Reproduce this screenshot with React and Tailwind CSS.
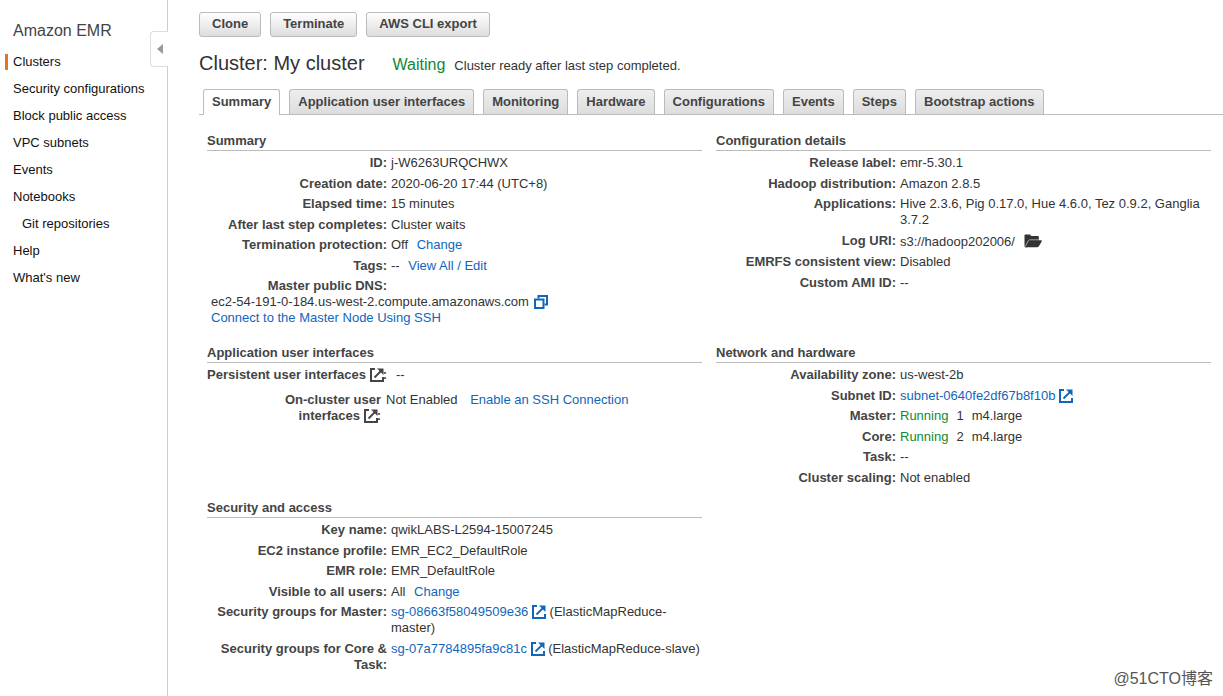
import React from "react";

const navItems = [
  { label: "Clusters", active: true },
  { label: "Security configurations" },
  { label: "Block public access" },
  { label: "VPC subnets" },
  { label: "Events" },
  { label: "Notebooks" },
  { label: "Git repositories", nested: true },
  { label: "Help" },
  { label: "What's new" },
];

const actions = ["Clone", "Terminate", "AWS CLI export"];

const tabs = [
  "Summary",
  "Application user interfaces",
  "Monitoring",
  "Hardware",
  "Configurations",
  "Events",
  "Steps",
  "Bootstrap actions",
];

const ExternalIcon = ({ className = "" }) => (
  <svg
    viewBox="0 0 14 14"
    className={`inline-block size-[14px] align-[-3px] ${className}`}
    fill="none"
    stroke="currentColor"
    strokeWidth="2"
    aria-hidden="true"
  >
    <path d="M5 1H1v12h12V9" />
    <path d="M4.5 9.5 11 3" strokeWidth="1.8" />
    <path d="M7 .5h6.5V7z" fill="currentColor" stroke="none" />
  </svg>
);

const CopyIcon = () => (
  <svg
    viewBox="0 0 14 14"
    className="size-[14px]"
    fill="none"
    stroke="currentColor"
    strokeWidth="2"
    aria-hidden="true"
  >
    <path d="M4.5 3.5V1H13v8.5h-2.5" />
    <path d="M1 4.5h8.5V13H1z" />
  </svg>
);

const FolderIcon = () => (
  <svg viewBox="0 0 18 14" className="h-[14px] w-[18px]" aria-hidden="true">
    <path
      d="M.5 12V1.6C.5.8.9.4 1.6.4h4c.8 0 1.1.5 1.4 1.6h6.6c.8 0 1.2.4 1.2 1.2V8L2 13.4C1 13.4.5 12.8.5 12z"
      fill="#333"
    />
    <path
      d="M1.4 13.2 4.6 7.3c.4-.8.9-1.1 1.7-1.1H17c.8 0 1.1.5.7 1.2l-2.7 4.7c-.4.8-.9 1.1-1.7 1.1z"
      fill="#333"
    />
    <path
      d="M1.2 12.6 4.2 7c.5-.9 1-1.2 1.9-1.2h8.7"
      fill="none"
      stroke="#bbb"
      strokeWidth=".8"
    />
  </svg>
);

const Link = ({ children, className = "" }) => (
  <a href="#" className={`text-[#1166bb] hover:underline ${className}`}>
    {children}
  </a>
);

const Section = ({ title, children }) => (
  <section>
    <h2 className="border-b border-[#bbb] pb-px text-[13px] font-bold leading-4 text-[#444]">
      {title}
    </h2>
    <dl className="pt-1">{children}</dl>
  </section>
);

const Row = ({ label, children }) => (
  <div className="flex gap-1 odd:pb-[5px] even:pb-1">
    <dt className="w-[180px] shrink-0 text-right font-bold text-[#444]">
      {label}:
    </dt>
    <dd>{children}</dd>
  </div>
);

const Sidebar = () => (
  <nav className="relative w-[168px] shrink-0 border-r border-[#ccc] pt-[21px]">
    <h1 className="pl-[13px] text-base leading-5 text-[#444]">Amazon EMR</h1>
    <ul className="pt-[13px]">
      {navItems.map((item) => (
        <li key={item.label} className="pb-[11px] pl-[5px]">
          <a
            href="#"
            className={`block border-l-[3px] text-[#111] ${
              item.active ? "border-[#dd7722]" : "border-transparent"
            } ${item.nested ? "pl-[14px]" : "pl-[5px]"}`}
          >
            {item.label}
          </a>
        </li>
      ))}
    </ul>
    {/* collapse handle sits on top of the sidebar border */}
    <button
      aria-label="Collapse sidebar"
      className="absolute -right-px top-[31px] flex h-9 w-[18px] items-center justify-center rounded-l border border-r-0 border-[#ddd] bg-white"
    >
      <svg viewBox="0 0 6 10" className="h-[10px] w-[6px]" aria-hidden="true">
        <path d="M6 0v10L0 5z" fill="#999" />
      </svg>
    </button>
  </nav>
);

const App = () => (
  <div className="relative flex min-h-screen bg-white font-['Liberation_Sans',Arial,sans-serif] text-[13px] leading-4 text-[#333]">
    <Sidebar />

    <main className="min-w-0 flex-1 pt-3">
      <div className="flex gap-[9px] pl-[31px]">
        {actions.map((label) => (
          <button
            key={label}
            className="h-[25px] rounded-[3px] border border-[#bbb] bg-linear-to-b from-white to-[#ddd] px-3 pb-px font-bold text-[#444]"
          >
            {label}
          </button>
        ))}
      </div>

      <div className="flex items-baseline pl-[31px] pt-[14px]">
        <h2 className="text-xl leading-6 text-[#333]">Cluster: My cluster</h2>
        <span className="pl-7 text-base leading-6 text-[#118833]">Waiting</span>
        <span className="pl-[9px]">Cluster ready after last step completed.</span>
      </div>

      <div className="ml-[31px] mt-3 flex gap-[9px] border-b border-[#bbb] pl-1">
        {tabs.map((tab, idx) => (
          <button
            key={tab}
            className={`rounded-t-[3px] border border-b-0 border-[#bbb] px-2 pt-1 font-bold text-[#444] ${
              idx === 0
                ? "-mb-px bg-white pb-[5px]"
                : "bg-linear-to-b from-[#eee] to-[#ddd] pb-1"
            }`}
          >
            {tab}
          </button>
        ))}
      </div>

      <div className="grid grid-cols-2 gap-x-[14px] gap-y-[10px] pl-[39px] pr-3 pt-[18px]">
        <Section title="Summary">
          <Row label="ID">j-W6263URQCHWX</Row>
          <Row label="Creation date">2020-06-20 17:44 (UTC+8)</Row>
          <Row label="Elapsed time">15 minutes</Row>
          <Row label="After last step completes">Cluster waits</Row>
          <Row label="Termination protection">
            Off <Link className="ml-[5px]">Change</Link>
          </Row>
          <Row label="Tags">
            -- <Link className="ml-[5px]">View All / Edit</Link>
          </Row>
          <div className="pb-[9px]">
            <dt className="w-[180px] text-right font-bold text-[#444]">
              Master public DNS:
            </dt>
            <dd className="pl-1">
              <div className="flex items-center gap-[5px]">
                ec2-54-191-0-184.us-west-2.compute.amazonaws.com
                <button aria-label="Copy DNS" className="text-[#1166bb]">
                  <CopyIcon />
                </button>
              </div>
              <Link>Connect to the Master Node Using SSH</Link>
            </dd>
          </div>
        </Section>

        <Section title="Configuration details">
          <Row label="Release label">emr-5.30.1</Row>
          <Row label="Hadoop distribution">Amazon 2.8.5</Row>
          <Row label="Applications">
            Hive 2.3.6, Pig 0.17.0, Hue 4.6.0, Tez 0.9.2, Ganglia 3.7.2
          </Row>
          <Row label="Log URI">
            <div className="flex items-start gap-[9px] pt-px">
              s3://hadoop202006/
              <button aria-label="Browse logs">
                <FolderIcon />
              </button>
            </div>
          </Row>
          <Row label="EMRFS consistent view">Disabled</Row>
          <Row label="Custom AMI ID">--</Row>
        </Section>

        <Section title="Application user interfaces">
          <div className="flex gap-[9px] pb-[9px]">
            <dt className="w-[180px] shrink-0 whitespace-nowrap text-right font-bold text-[#444]">
              Persistent user interfaces <ExternalIcon className="-mr-px" />:
            </dt>
            <dd>--</dd>
          </div>
          <div className="flex gap-[5px]">
            <dt className="w-[174px] shrink-0 pl-[70px] text-right font-bold text-[#444]">
              On-cluster user interfaces <ExternalIcon className="-mr-px" />:
            </dt>
            <dd>
              Not Enabled <Link className="ml-[9px]">Enable an SSH Connection</Link>
            </dd>
          </div>
        </Section>

        <Section title="Network and hardware">
          <Row label="Availability zone">us-west-2b</Row>
          <Row label="Subnet ID">
            <Link>
              subnet-0640fe2df67b8f10b <ExternalIcon />
            </Link>
          </Row>
          <Row label="Master">
            <span className="text-[#118833]">Running</span>
            <span className="px-2">1</span>m4.large
          </Row>
          <Row label="Core">
            <span className="text-[#118833]">Running</span>
            <span className="px-2">2</span>m4.large
          </Row>
          <Row label="Task">--</Row>
          <Row label="Cluster scaling">Not enabled</Row>
        </Section>

        <Section title="Security and access">
          <Row label="Key name">qwikLABS-L2594-15007245</Row>
          <Row label="EC2 instance profile">EMR_EC2_DefaultRole</Row>
          <Row label="EMR role">EMR_DefaultRole</Row>
          <Row label="Visible to all users">
            All <Link className="ml-[5px]">Change</Link>
          </Row>
          <Row label="Security groups for Master">
            <Link>
              sg-08663f58049509e36 <ExternalIcon />
            </Link>{" "}
            (ElasticMapReduce-master)
          </Row>
          <Row label="Security groups for Core & Task">
            <Link>
              sg-07a7784895fa9c81c <ExternalIcon />
            </Link>{" "}
            (ElasticMapReduce-slave)
          </Row>
        </Section>
      </div>
    </main>

    {/* watermark */}
    <span className="absolute bottom-[7px] right-[10px] font-['Liberation_Sans','Noto_Sans_CJK_SC',sans-serif] text-base leading-5 text-[#555]">
      @51CTO博客
    </span>
  </div>
);

export default App;
